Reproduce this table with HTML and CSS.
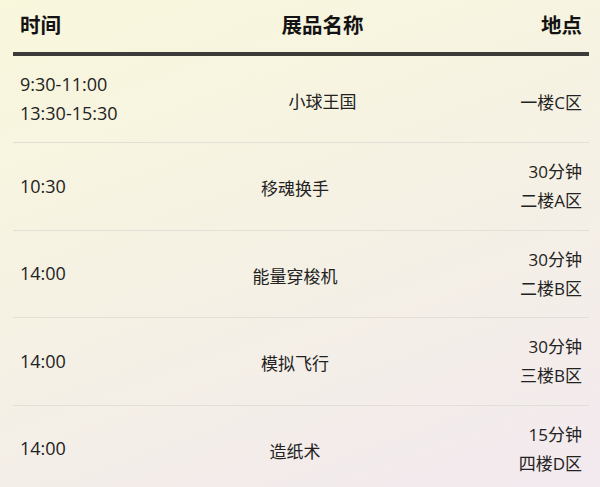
FILE: index.html
```html
<!DOCTYPE html>
<html lang="zh">
<head>
<meta charset="utf-8">
<link rel="stylesheet" href="styles.css">
</head>
<body>
<div class="table">
  <div class="row head">
    <div class="c time">时间</div>
    <div class="c name name-wide">展品名称</div>
    <div class="c place">地点</div>
  </div>
  <div class="row">
    <div class="c time">9:30-11:00<br>13:30-15:30</div>
    <div class="c name name-wide">小球王国</div>
    <div class="c place single">一楼C区</div>
  </div>
  <div class="row">
    <div class="c time">10:30</div>
    <div class="c name">移魂换手</div>
    <div class="c place">30分钟<br>二楼A区</div>
  </div>
  <div class="row">
    <div class="c time">14:00</div>
    <div class="c name">能量穿梭机</div>
    <div class="c place">30分钟<br>二楼B区</div>
  </div>
  <div class="row">
    <div class="c time">14:00</div>
    <div class="c name">模拟飞行</div>
    <div class="c place">30分钟<br>三楼B区</div>
  </div>
  <div class="row">
    <div class="c time">14:00</div>
    <div class="c name">造纸术</div>
    <div class="c place">15分钟<br>四楼D区</div>
  </div>
</div>
</body>
</html>
```

FILE: styles.css
```css
html, body {
  margin: 0;
  padding: 0;
  height: 100%;
  overflow: hidden;
}
body {
  background: linear-gradient(160deg, #f9f7dc 0%, #f5f1e4 50%, #f2e9ef 100%);
  font-family: "Open Sans", "Noto Sans CJK SC", sans-serif;
  color: #222;
  font-size: 17px;
  padding: 0 11px 0 13px;
}
.table {
  display: flex;
  flex-direction: column;
}
.row {
  display: grid;
  grid-template-columns: 200px 164px 1fr;
  align-items: center;
  padding: 14px 0 14.4px;
  line-height: 29px;
  border-bottom: 1.5px solid #e3dfd6;
}
.row.head {
  padding: 10px 0 11px;
  height: 31px;
  border-bottom: 4px solid #3d3b37;
  font-weight: 700;
  font-size: 20.5px;
  color: #131313;
}
.c {
  padding: 0 7px;
}
.time {
  text-align: left;
  font-size: 18px;
}
.head .time {
  font-size: 20.5px;
}
.name {
  text-align: center;
  padding-top: 5px;
}
.head .name {
  padding-top: 0;
}
.name-wide {
  padding-left: 55px;
  padding-right: 0;
}
.place {
  text-align: right;
}
.single {
  padding-top: 7px;
}
```
